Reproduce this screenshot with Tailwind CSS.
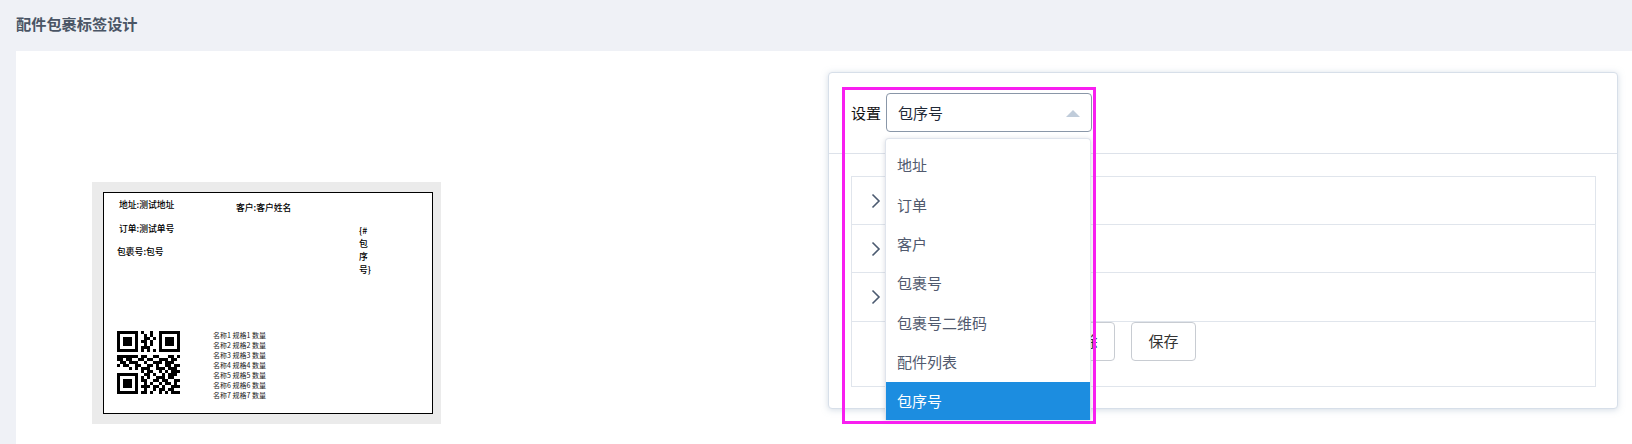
<!DOCTYPE html>
<html lang="zh">
<head>
  <meta charset="UTF-8">
  <title>配件包裹标签设计</title>
  <script src="https://cdn.jsdelivr.net/npm/@tailwindcss/browser@4"></script>
</head>
<body class="bg-[#eff1f6] h-[444px] overflow-hidden font-['Noto_Sans_CJK_SC','Noto_Sans',sans-serif]">

  <!-- page title -->
  <div class="h-[51px] pl-4 pb-[5px] flex items-center">
    <h1 class="text-[15.2px] font-bold text-[#4a5565]">配件包裹标签设计</h1>
  </div>

  <div class="ml-4 h-[393px] bg-white flex items-start">

    <!-- label preview -->
    <div class="ml-[76px] mt-[131px] w-[349px] h-[242px] bg-[#ebebeb] px-[11px] py-[10px]">
      <div class="relative w-[330px] h-[222px] bg-white border border-black text-[8.8px] font-medium leading-[10px] text-black">
        <span class="absolute left-[15px] top-[7px]">地址:测试地址</span>
        <span class="absolute left-[132px] top-[10px]">客户:客户姓名</span>
        <span class="absolute left-[15px] top-[31px]">订单:测试单号</span>
        <span class="absolute left-[13px] top-[54px]">包裹号:包号</span>
        <div class="absolute left-[255px] top-[31px] w-[12px] leading-[13px] break-all">{#包序号}</div>
        <svg id="qr" class="absolute left-[13px] top-[138px]" width="63" height="63" viewBox="0 0 21 21" shape-rendering="crispEdges"></svg>
        <div class="absolute left-[109px] top-[137px] text-[7px] font-normal leading-[10px] text-[#222]">
          <div>名称1 规格1 数量</div>
          <div>名称2 规格2 数量</div>
          <div>名称3 规格3 数量</div>
          <div>名称4 规格4 数量</div>
          <div>名称5 规格5 数量</div>
          <div>名称6 规格6 数量</div>
          <div>名称7 规格7 数量</div>
        </div>
      </div>
    </div>

    <!-- settings card -->
    <div class="relative ml-auto mr-[14px] mt-[21px] w-[790px] h-[337px] bg-white border border-[#d7dfe9] rounded shadow-[0_1px_6px_rgba(170,185,205,0.5)]">
      <div class="h-[81px] border-b border-[#dde2ea] pl-[22px] pb-[1px] flex items-center gap-[5px] text-[15px] text-[#111]">
        <span class="pt-[1px]">设置</span>
        <div class="w-[206px] h-[39px] border border-[#8a97a8] rounded pl-[11px] pr-[11px] pt-[1px] flex items-center justify-between text-[#1f2937]">
          <span>包序号</span>
          <span class="w-0 h-0 border-x-[7px] border-x-transparent border-b-[7px] border-b-[#c0ccda]"></span>
        </div>
      </div>

      <div class="pl-[22px] pr-[21px] pt-[22px]">
        <div class="border border-[#e0e5ec] text-[#4b5a70]">
          <div class="h-[48px] border-b border-[#e0e5ec] pl-[19px] flex items-center">
            <svg width="10" height="16" viewBox="0 0 10 16" fill="none" stroke="currentColor" stroke-width="1.6"><path d="M1.500 1.500 8 8l-6.500 6.500"/></svg>
          </div>
          <div class="h-[48px] border-b border-[#e0e5ec] pl-[19px] flex items-center">
            <svg width="10" height="16" viewBox="0 0 10 16" fill="none" stroke="currentColor" stroke-width="1.6"><path d="M1.500 1.500 8 8l-6.500 6.500"/></svg>
          </div>
          <div class="h-[49px] border-b border-[#e0e5ec] pl-[19px] flex items-center">
            <svg width="10" height="16" viewBox="0 0 10 16" fill="none" stroke="currentColor" stroke-width="1.6"><path d="M1.500 1.500 8 8l-6.500 6.500"/></svg>
          </div>
          <div class="h-[64px] pl-[198px] flex items-start gap-[16px] text-[15px] text-[#333]">
            <button class="w-[65px] h-[39px] border border-[#c8ccd2] rounded">删除</button>
            <button class="w-[65px] h-[39px] border border-[#c8ccd2] rounded">保存</button>
          </div>
        </div>
      </div>

      <!-- open dropdown -->
      <div class="absolute left-[56px] top-[65px] w-[206px] h-[282px] bg-white border border-[#dfe4ec] border-b-0 rounded-t shadow-[0_1px_5px_rgba(120,130,150,0.3)] pt-[7px] text-[15px] text-[#515a6e]">
        <div class="h-[39.33px] pl-[11px] flex items-center">地址</div>
        <div class="h-[39.33px] pl-[11px] flex items-center">订单</div>
        <div class="h-[39.33px] pl-[11px] flex items-center">客户</div>
        <div class="h-[39.33px] pl-[11px] flex items-center">包裹号</div>
        <div class="h-[39.33px] pl-[11px] flex items-center">包裹号二维码</div>
        <div class="h-[39.33px] pl-[11px] flex items-center">配件列表</div>
        <div class="h-[38px] pl-[11px] flex items-center bg-[#1c8de0] text-white">包序号</div>
      </div>

      <!-- highlight frame -->
      <div class="absolute left-[13px] top-[14px] w-[254px] h-[337px] border-[3px] border-[#f81ef0] pointer-events-none"></div>
    </div>
  </div>

<script>
  const qrRows = [
    "111111101001001111111",
    "100000100101001000001",
    "101110100110101011101",
    "101110101101001011101",
    "101110100101001011101",
    "100000101110001000001",
    "111111101010101111111",
    "000000000000000000000",
    "111111101100110001101",
    "110110011011001110110",
    "011011100100111011100",
    "101100110011010011011",
    "000010101110011101110",
    "000000001011001010111",
    "111111100110100101110",
    "100000101010011101100",
    "101110101100110110011",
    "101110100101001011010",
    "101110101110110100111",
    "100000100100101101100",
    "111111101101001010111"
  ];

  let qrPath = "";
  qrRows.forEach((row, y) => {
    [...row].forEach((cell, x) => {
      if (cell === "1") qrPath += `M${x} ${y}h1v1h-1z`;
    });
  });
  document.getElementById("qr").innerHTML = `<path d="${qrPath}" fill="#000"/>`;
</script>

</body>
</html>
